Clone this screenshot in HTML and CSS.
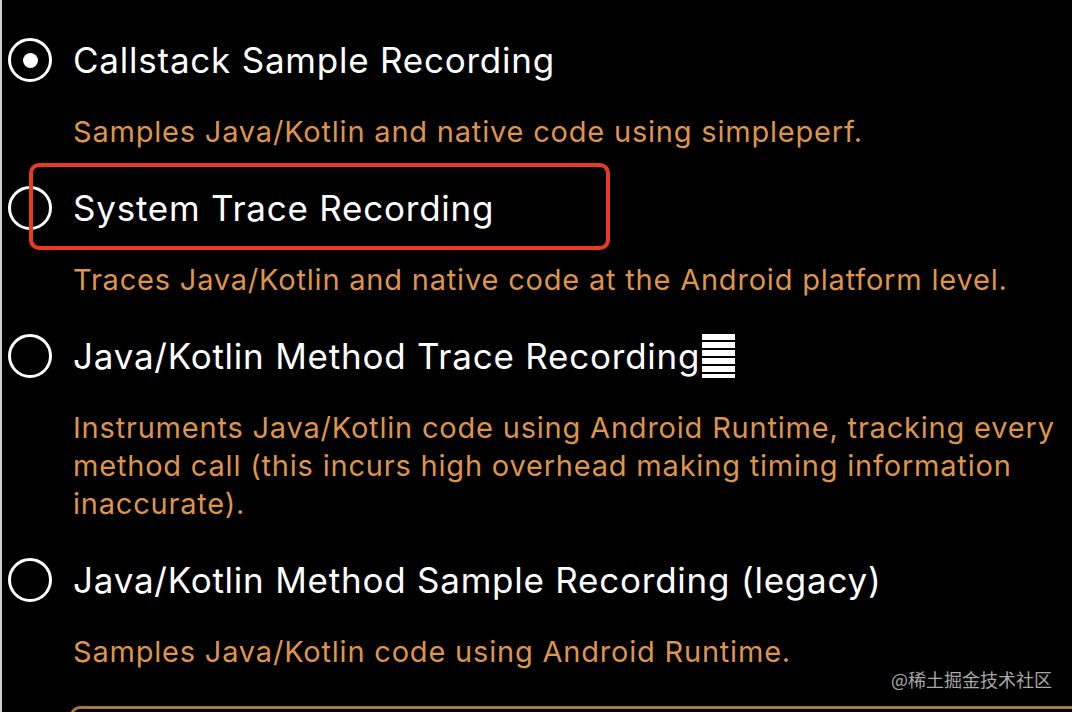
FILE: index.html
```html
<!DOCTYPE html>
<html>
<head>
<meta charset="utf-8">
<link rel="stylesheet" href="styles.css">
</head>
<body>
<div class="page">
  <ul class="options">
    <li class="option">
      <div class="row">
        <span class="radio checked"></span>
        <span class="title">Callstack Sample Recording</span>
      </div>
      <p class="desc">Samples Java/Kotlin and native code using simpleperf.</p>
    </li>
    <li class="option">
      <div class="row">
        <span class="radio"></span>
        <span class="title">System Trace Recording</span>
      </div>
      <p class="desc">Traces Java/Kotlin and native code at the Android platform level.</p>
    </li>
    <li class="option">
      <div class="row">
        <span class="radio"></span>
        <span class="title">Java/Kotlin Method Trace Recording</span>
        <svg class="menu-icon" width="33" height="44" viewBox="0 0 33 44">
          <rect x="0" y="0" width="33" height="44" fill="#fff"/>
          <rect x="0" y="6" width="33" height="2" fill="#000"/>
          <rect x="0" y="14" width="33" height="2" fill="#000"/>
          <rect x="0" y="22" width="33" height="2" fill="#000"/>
          <rect x="0" y="30" width="33" height="2" fill="#000"/>
          <rect x="0" y="38" width="33" height="2" fill="#000"/>
        </svg>
      </div>
      <p class="desc">Instruments Java/Kotlin code using Android Runtime, tracking every<br>method call (this incurs high overhead making timing information<br>inaccurate).</p>
    </li>
    <li class="option">
      <div class="row">
        <span class="radio"></span>
        <span class="title">Java/Kotlin Method Sample Recording (legacy)</span>
      </div>
      <p class="desc">Samples Java/Kotlin code using Android Runtime.</p>
    </li>
  </ul>
  <div class="next-box"></div>
  <div class="highlight"></div>
  <div class="watermark">@稀土掘金技术社区</div>
</div>
</body>
</html>
```

FILE: styles.css
```css
* { box-sizing: border-box; }
html, body {
  margin: 0;
  padding: 0;
  background: #000;
  width: 1072px;
  height: 712px;
  overflow: hidden;
}
.page {
  position: relative;
  width: 1072px;
  height: 712px;
  border-left: 2px solid #cfcfcf;
  font-family: Inter, "Noto Sans", sans-serif;
  overflow: hidden;
}
.options {
  list-style: none;
  margin: 0;
  padding: 38px 0 0 6px;
  display: flex;
  flex-direction: column;
  gap: 35px;
}
.option {
  display: flex;
  flex-direction: column;
  gap: 31px;
}
.row {
  display: flex;
  align-items: center;
  height: 44px;
}
.radio {
  width: 44px;
  height: 44px;
  border: 3px solid #fff;
  border-radius: 50%;
  display: flex;
  align-items: center;
  justify-content: center;
  flex: none;
}
.radio.checked::after {
  content: "";
  width: 15px;
  height: 15px;
  border-radius: 50%;
  background: #fff;
}
.title {
  margin-left: 21px;
  color: #fff;
  font-size: 35px;
  letter-spacing: 0.77px;
  line-height: 44px;
  white-space: nowrap;
}
.menu-icon { flex: none; margin-left: 2px; }
.desc {
  margin: 0 0 0 65px;
  color: #de944a;
  font-size: 29px;
  letter-spacing: 0.8px;
  line-height: 38px;
  white-space: nowrap;
}
.next-box {
  position: absolute;
  left: 68px;
  top: 706px;
  width: 1100px;
  height: 40px;
  border: 3px solid #a47845;
  border-radius: 10px;
}
.highlight {
  position: absolute;
  left: 27px;
  top: 163px;
  width: 581px;
  height: 87px;
  border: 4px solid #ec3a22;
  border-radius: 10px;
}
.watermark {
  position: absolute;
  right: 20px;
  top: 666px;
  color: #a8a8a8;
  font-family: "Noto Sans CJK SC", sans-serif;
  font-size: 18px;
  line-height: 26px;
}
```
